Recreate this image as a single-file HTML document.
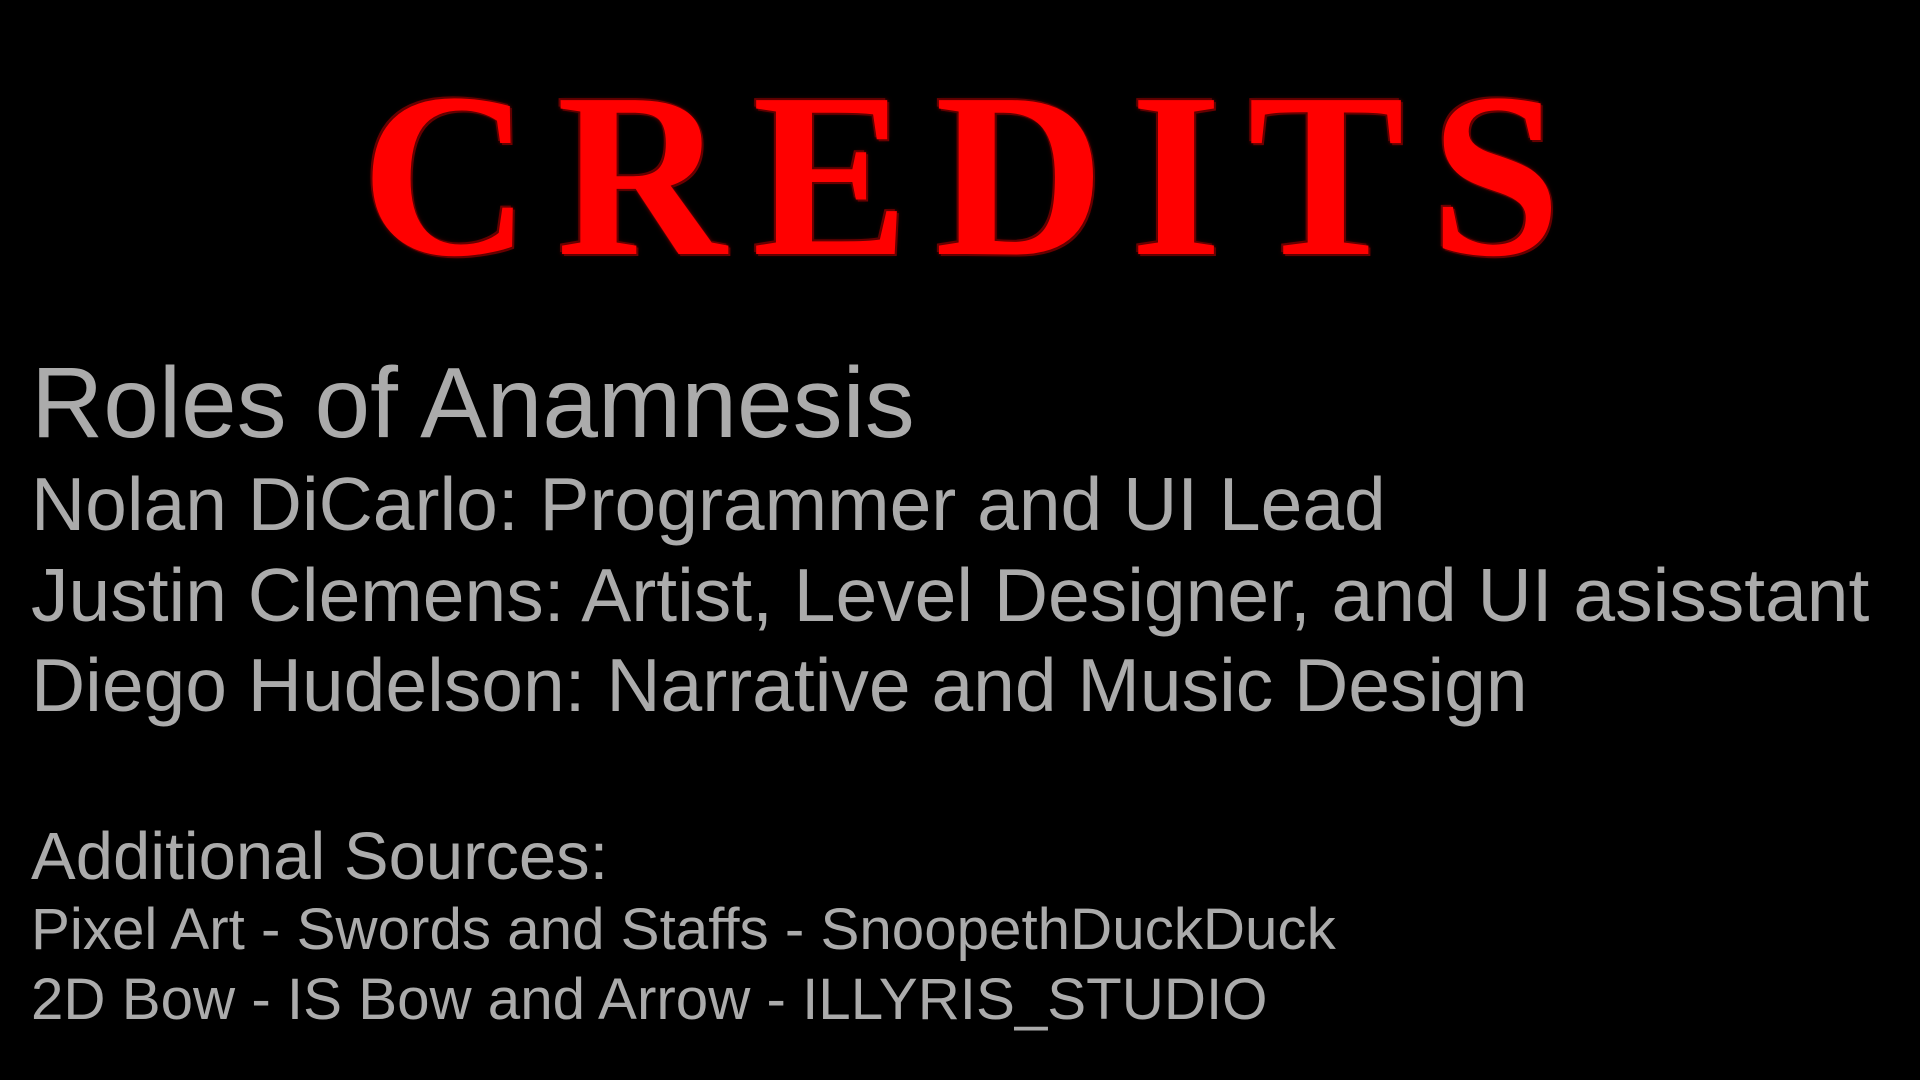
<!DOCTYPE html>
<html><head><meta charset="utf-8"><style>
html,body{margin:0;padding:0;background:#000;width:1920px;height:1080px;overflow:hidden}
.t{position:absolute;left:31px;font-family:"Liberation Sans",sans-serif;color:#ababab;white-space:nowrap;line-height:normal}
.title{position:absolute;left:361px;width:1200px;top:60px;height:230px;display:flex;justify-content:space-between;font-family:"Liberation Serif",serif;font-weight:bold;font-size:235px;line-height:230px;color:#f00;text-shadow:0 0 3px #600,0 0 6px #400,2px 2px 0 #700,-2px -2px 0 #700}
</style></head><body>
<div class="title"><span>C</span><span>R</span><span>E</span><span>D</span><span>I</span><span>T</span><span>S</span></div>
<div class="t" style="top:346px;font-size:100px">Roles of Anamnesis</div>
<div class="t" style="top:461px;font-size:75px">Nolan DiCarlo: Programmer and UI Lead</div>
<div class="t" style="top:552px;font-size:75px">Justin Clemens: Artist, Level Designer, and UI asisstant</div>
<div class="t" style="top:642px;font-size:75px">Diego Hudelson: Narrative and Music Design</div>
<div class="t" style="top:818px;font-size:67px">Additional Sources:</div>
<div class="t" style="top:896px;font-size:58.3px">Pixel Art - Swords and Staffs - SnoopethDuckDuck</div>
<div class="t" style="top:966px;font-size:58.3px">2D Bow - IS Bow and Arrow - ILLYRIS_STUDIO</div>
</body></html>
